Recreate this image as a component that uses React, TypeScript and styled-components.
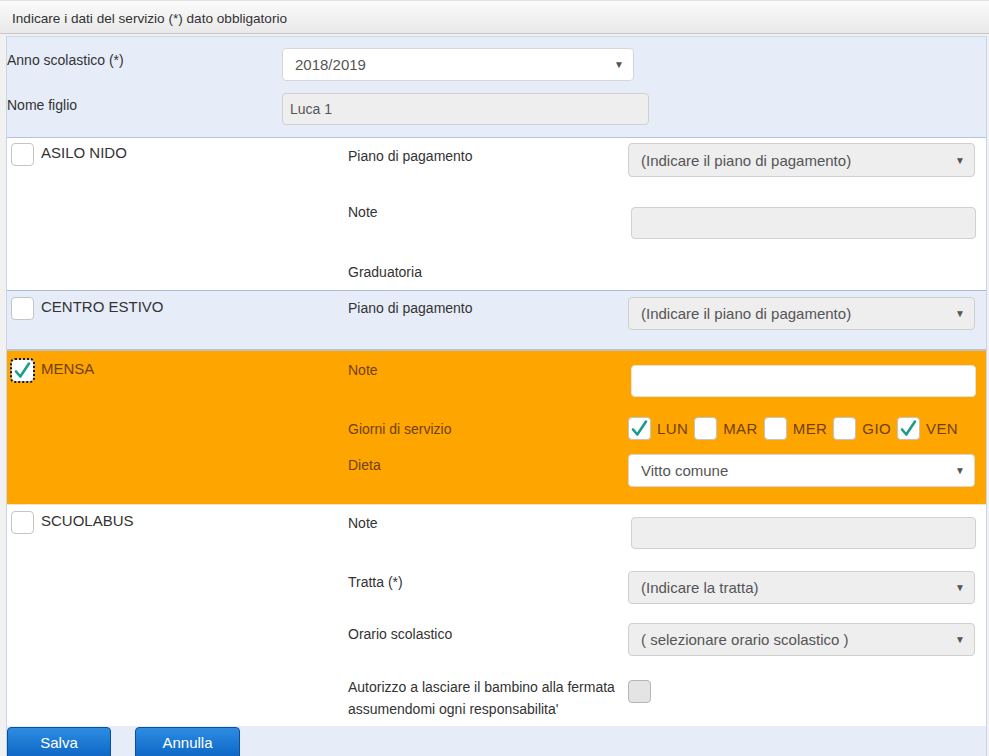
import React from "react";
import styled, { createGlobalStyle } from "styled-components";

const Global = createGlobalStyle`
  html, body { margin: 0; padding: 0; }
  body {
    background: #f1f1f1;
    font-family: "Liberation Sans", Arial, sans-serif;
    color: #333;
  }
  * { box-sizing: border-box; }
`;

const Header = styled.div`
  height: 34px;
  padding: 2px 0 0 12px;
  line-height: 31px;
  font-size: 13.6px;
  color: #333;
  background: linear-gradient(#fbfbfb, #e9e9e9);
  border-top: 1px solid #e2e2e2;
  border-bottom: 1px solid #c6c6c6;
`;

const Panel = styled.div`
  margin: 2px 2px 0 6px;
  border-left: 1px solid #c9d5ea;
  border-right: 1px solid #c9d5ea;
  border-top: 1px solid #cfd9ec;
  background: #e7edf8;
`;

const TopSection = styled.div`
  display: grid;
  grid-template-columns: 275px 1fr;
  row-gap: 12px;
  padding: 11px 0 12px 0;
  border-bottom: 1px solid #b4c4dc;
  align-items: start;
`;

const TopLabel = styled.div`
  font-size: 14px;
  line-height: 22px;
  padding-top: 1px;
`;

const SelectBox = styled.div<{ $h?: number; $w?: string; $disabled?: boolean }>`
  height: ${(p) => p.$h ?? 33}px;
  width: ${(p) => p.$w ?? "100%"};
  display: flex;
  align-items: center;
  justify-content: space-between;
  padding: 0 9px 0 12px;
  border: 1px solid ${(p) => (p.$disabled ? "#cfcfcf" : "#d6d6d6")};
  border-radius: 4px;
  background: ${(p) => (p.$disabled ? "#eeeeee" : "#ffffff")};
  font-size: 15px;
  color: #555;
`;

const Arrow = styled.span`
  font-size: 10px;
  color: #555;
`;

const TextBox = styled.div<{ $w?: string; $white?: boolean; $mt?: number }>`
  height: 32px;
  width: ${(p) => p.$w ?? "auto"};
  margin-top: ${(p) => p.$mt ?? 0}px;
  display: flex;
  align-items: center;
  padding: 0 7px;
  border: 1px solid ${(p) => (p.$white ? "#e2e2e2" : "#d0d0d0")};
  border-radius: 4px;
  background: ${(p) => (p.$white ? "#ffffff" : "#eeeeee")};
  font-size: 14px;
  color: #555;
`;

const NoteBox = styled(TextBox)`
  margin-left: 3px;
  margin-right: -1px;
`;

const ServiceRow = styled.div<{ $bg: string; $pt: number; $pb: number; $border?: string; $ink?: string }>`
  display: grid;
  grid-template-columns: 337px 1fr;
  padding: ${(p) => p.$pt}px 11px ${(p) => p.$pb}px 4px;
  background: ${(p) => p.$bg};
  border-bottom: ${(p) => p.$border ?? "none"};
  color: ${(p) => p.$ink ?? "#333"};
`;

const ServiceName = styled.div`
  display: flex;
  align-items: flex-start;
  gap: 7px;
  font-size: 15px;
  line-height: 20px;
`;

const Fields = styled.div`
  display: flex;
  flex-direction: column;
`;

const Field = styled.div<{ $mt?: number; $center?: boolean }>`
  display: grid;
  grid-template-columns: 280px 1fr;
  align-items: ${(p) => (p.$center ? "center" : "start")};
  margin-top: ${(p) => p.$mt ?? 0}px;
`;

const FieldLabel = styled.div<{ $pt?: number }>`
  font-size: 14px;
  line-height: 22px;
  padding-top: ${(p) => p.$pt ?? 0}px;
`;

const Box = styled.span<{ $focus?: boolean; $grey?: boolean; $mt?: number }>`
  flex: none;
  width: 23px;
  height: 23px;
  margin-top: ${(p) => p.$mt ?? 0}px;
  display: inline-flex;
  align-items: center;
  justify-content: center;
  border: 1px solid ${(p) => (p.$grey ? "#b5b5b5" : "#c4c4c4")};
  border-radius: 4px;
  background: ${(p) => (p.$grey ? "#e4e4e4" : "#ffffff")};
  outline: ${(p) => (p.$focus ? "2px dotted #1a1a1a" : "none")};
  outline-offset: -1px;
`;

const Days = styled.div`
  display: flex;
  align-items: center;
  gap: 6px;
  font-size: 15px;
  line-height: 20px;
`;

const DayText = styled.span`
  letter-spacing: 0.4px;
`;

const Footer = styled.div`
  display: flex;
  gap: 24px;
  padding-top: 1px;
  height: 40px;
  background: #e7edf8;
`;

const Button = styled.button<{ $w: number }>`
  width: ${(p) => p.$w}px;
  height: 34px;
  padding: 0 0 4px 0;
  border: 1px solid #0b4f9c;
  border-radius: 4px;
  background: linear-gradient(#2d8de2, #0a62c2);
  color: #fff;
  font-family: "Liberation Sans", Arial, sans-serif;
  font-size: 15px;
`;

const CheckMark = () => (
  <svg width="19" height="19" viewBox="0 0 19 19">
    <path d="M3 10.5 L7.3 15.5 L16 2.5" fill="none" stroke="#1b9c8c" strokeWidth="2.6" strokeLinecap="round" strokeLinejoin="round" />
  </svg>
);

const Check: React.FC<{ checked?: boolean; focus?: boolean; grey?: boolean; mt?: number }> = ({ checked, focus, grey, mt }) => (
  <Box $focus={focus} $grey={grey} $mt={mt}>{checked ? <CheckMark /> : null}</Box>
);

const Select: React.FC<{ text: string; disabled?: boolean; h?: number; w?: string }> = ({ text, disabled, h, w }) => (
  <SelectBox $disabled={disabled} $h={h} $w={w}>
    <span>{text}</span>
    <Arrow>▼</Arrow>
  </SelectBox>
);

const days: { d: string; c: boolean }[] = [
  { d: "LUN", c: true },
  { d: "MAR", c: false },
  { d: "MER", c: false },
  { d: "GIO", c: false },
  { d: "VEN", c: true },
];

export default function App() {
  return (
    <>
      <Global />
      <Header>Indicare i dati del servizio (*) dato obbligatorio</Header>
      <Panel>
        <TopSection>
          <TopLabel>Anno scolastico (*)</TopLabel>
          <Select text="2018/2019" w="352px" />
          <TopLabel>Nome figlio</TopLabel>
          <TextBox $w="367px">Luca 1</TextBox>
        </TopSection>

        <ServiceRow $bg="#ffffff" $pt={5} $pb={7} $border="1px solid #a9bbd6">
          <ServiceName><Check />ASILO NIDO</ServiceName>
          <Fields>
            <Field>
              <FieldLabel $pt={2}>Piano di pagamento</FieldLabel>
              <Select text="(Indicare il piano di pagamento)" disabled h={34} />
            </Field>
            <Field $mt={24}>
              <FieldLabel>Note</FieldLabel>
              <NoteBox $mt={6} />
            </Field>
            <Field $mt={22}>
              <FieldLabel>Graduatoria</FieldLabel>
            </Field>
          </Fields>
        </ServiceRow>

        <ServiceRow $bg="#e7edf8" $pt={6} $pb={19} $border="2px solid #c2c2c2">
          <ServiceName><Check />CENTRO ESTIVO</ServiceName>
          <Fields>
            <Field>
              <FieldLabel>Piano di pagamento</FieldLabel>
              <Select text="(Indicare il piano di pagamento)" disabled />
            </Field>
          </Fields>
        </ServiceRow>

        <ServiceRow $bg="#ffa500" $pt={8} $pb={17} $ink="#70400c" $border="1px solid #f3e3c8">
          <ServiceName><Check checked focus />MENSA</ServiceName>
          <Fields>
            <Field>
              <FieldLabel>Note</FieldLabel>
              <NoteBox $mt={6} $white />
            </Field>
            <Field $mt={20} $center>
              <FieldLabel>Giorni di servizio</FieldLabel>
              <Days>
                {days.map((x) => (
                  <React.Fragment key={x.d}>
                    <Check checked={x.c} />
                    <DayText>{x.d}</DayText>
                  </React.Fragment>
                ))}
              </Days>
            </Field>
            <Field $mt={14}>
              <FieldLabel>Dieta</FieldLabel>
              <Select text="Vitto comune" />
            </Field>
          </Fields>
        </ServiceRow>

        <ServiceRow $bg="#ffffff" $pt={6} $pb={6}>
          <ServiceName><Check />SCUOLABUS</ServiceName>
          <Fields>
            <Field>
              <FieldLabel $pt={1}>Note</FieldLabel>
              <NoteBox $mt={6} />
            </Field>
            <Field $mt={22}>
              <FieldLabel>Tratta (*)</FieldLabel>
              <Select text="(Indicare la tratta)" disabled />
            </Field>
            <Field $mt={19}>
              <FieldLabel>Orario scolastico</FieldLabel>
              <Select text="( selezionare orario scolastico )" disabled />
            </Field>
            <Field $mt={19}>
              <FieldLabel $pt={1}>Autorizzo a lasciare il bambino alla fermata assumendomi ogni responsabilita'</FieldLabel>
              <Check grey mt={5} />
            </Field>
          </Fields>
        </ServiceRow>

        <Footer>
          <Button $w={104}>Salva</Button>
          <Button $w={105}>Annulla</Button>
        </Footer>
      </Panel>
    </>
  );
}
